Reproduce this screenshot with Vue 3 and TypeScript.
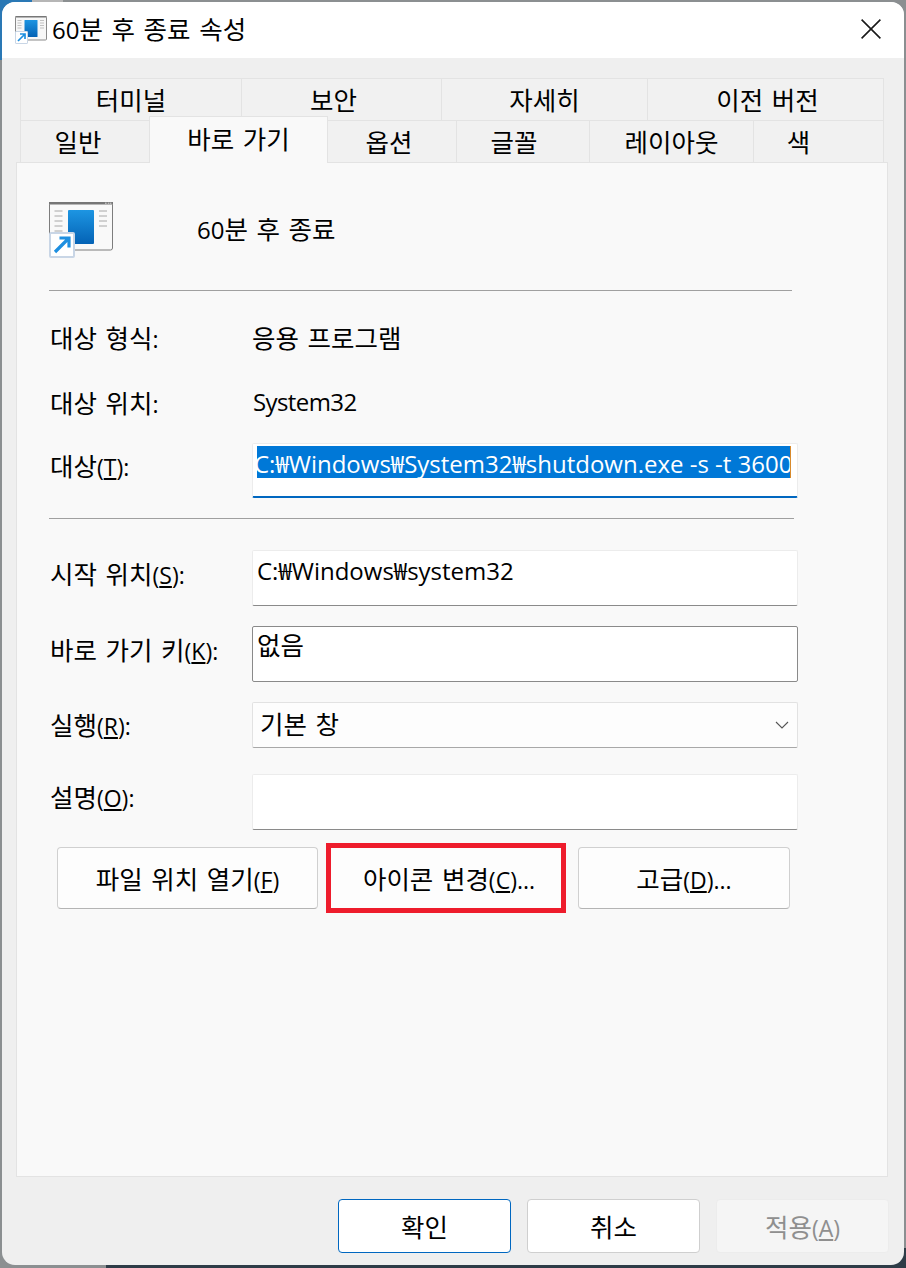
<script setup lang="ts">
const topTabs = [
  { label: '터미널', w: 222, shift: 0 },
  { label: '보안', w: 201, shift: -8 },
  { label: '자세히', w: 207, shift: 0 },
  { label: '이전 버전', w: 237, shift: 2 },
]
const lowTabs = [
  { label: '일반', w: 130, shift: -7, active: false },
  { label: '바로 가기', w: 179, shift: 0, active: true },
  { label: '옵션', w: 130, shift: -3, active: false },
  { label: '글꼴', w: 134, shift: -9, active: false },
  { label: '레이아웃', w: 165, shift: 0, active: false },
  { label: '색', w: 131, shift: -20, active: false },
]
function tabStyle(t: { w: number; shift: number }) {
  return {
    width: t.w + 'px',
    paddingLeft: Math.max(t.shift * 2, 0) + 'px',
    paddingRight: Math.max(-t.shift * 2, 0) + 'px',
  }
}
</script>

<template>
  <div class="desk">
    <div class="window">
      <header class="titlebar">
        <svg class="icon-small" viewBox="0 0 64 56">
          <defs>
            <linearGradient id="blueA" x1="0" y1="0" x2="0" y2="1">
              <stop offset="0" stop-color="#1d95e2" />
              <stop offset="1" stop-color="#0462b5" />
            </linearGradient>
          </defs>
          <rect x="1" y="1" width="62" height="47" rx="2" fill="#f7f7f7" stroke="#8a8a8a" stroke-width="2" />
          <rect x="1" y="0" width="62" height="3" fill="#777" />
          <rect x="19" y="8" width="26" height="34" rx="1" fill="url(#blueA)" />
          <path d="M5 9h8M5 14h8M5 19h8M5 24h8M50 9h8M50 14h8M50 19h8M50 24h8" stroke="#aaa" stroke-width="1.4" />
          <rect x="1" y="31" width="24" height="24" rx="1" fill="#fff" stroke="#c9d6e6" stroke-width="2" />
          <path d="M6 50L19 37M10 36h10v10" fill="none" stroke="#1e8fe0" stroke-width="3.4" />
        </svg>
        <span class="title"><span class="lt">60</span>분 후 종료 속성</span>
        <svg class="close" viewBox="0 0 20 20">
          <path d="M.6.6l18.800 18.800M19.400.6L.6 19.400" stroke="#1a1a1a" stroke-width="1.6" fill="none" />
        </svg>
      </header>

      <div class="body">
        <div class="tabs">
          <div class="tab-row">
            <div v-for="t in topTabs" :key="t.label" class="tab" :style="tabStyle(t)">{{ t.label }}</div>
          </div>
          <div class="tab-row">
            <div
              v-for="t in lowTabs"
              :key="t.label"
              class="tab"
              :class="{ active: t.active }"
              :style="tabStyle(t)"
            >{{ t.label }}</div>
          </div>
        </div>

        <section class="panel">
          <div class="head">
            <svg class="icon-big" viewBox="0 0 64 56">
              <defs>
                <linearGradient id="blueB" x1="0" y1="0" x2="0" y2="1">
                  <stop offset="0" stop-color="#1d95e2" />
                  <stop offset="1" stop-color="#0462b5" />
                </linearGradient>
              </defs>
              <rect x=".5" y=".5" width="63" height="47.5" rx="2" fill="#f9f9f9" stroke="#7d7d7d" />
              <rect x="0" y="0" width="64" height="2.5" fill="#767676" />
              <path d="M56 1.200h1.600M58.800 1.200h1.600M61 1.200h1.400" stroke="#ddd" stroke-width="1" />
              <rect x="19" y="8" width="26" height="34" rx="1" fill="url(#blueB)" />
              <path d="M5.500 9h8M5.500 14h8M5.500 19h8M5.500 24h8M5.500 29h8M50 9h8M50 14h8M50 19h8M50 24h8" stroke="#a8a8a8" stroke-width="1" />
              <rect x="1" y="31" width="24" height="24" rx="1" fill="#fff" stroke="#c9d6e6" stroke-width="2" />
              <path d="M6 50L19 37M10.500 36h9.500v9.500" fill="none" stroke="#1e8fe0" stroke-width="3.2" />
            </svg>
            <span class="name"><span class="lt">60</span>분 후 종료</span>
          </div>

          <div class="sep sep-a"></div>

          <div class="row info first">
            <span class="label">대상 형식<span class="mn">:</span></span>
            <span class="value">응용 프로그램</span>
          </div>
          <div class="row info second">
            <span class="label">대상 위치<span class="mn">:</span></span>
            <span class="value sys">System32</span>
          </div>
          <div class="row target">
            <span class="label">대상<span class="mn">(<u>T</u>):</span></span>
            <div class="field focused"><span class="selected">C:₩Windows₩System32₩shutdown.exe -s -t 3600</span></div>
          </div>

          <div class="sep sep-b"></div>

          <div class="row start">
            <span class="label">시작 위치<span class="mn">(<u>S</u>):</span></span>
            <div class="field"><span>C:₩Windows₩system32</span></div>
          </div>
          <div class="row hotkey">
            <span class="label">바로 가기 키<span class="mn">(<u>K</u>):</span></span>
            <div class="field outlined"><span class="ko">없음</span></div>
          </div>
          <div class="row run">
            <span class="label">실행<span class="mn">(<u>R</u>):</span></span>
            <div class="combo">
              <span>기본 창</span>
              <svg class="chev" viewBox="0 0 14 8">
                <path d="M1 1l6 6 6-6" fill="none" stroke="#555" stroke-width="1.1" />
              </svg>
            </div>
          </div>
          <div class="row desc">
            <span class="label">설명<span class="mn">(<u>O</u>):</span></span>
            <div class="field"></div>
          </div>

          <div class="actions">
            <button class="btn a1">파일 위치 열기<span class="mn">(<u>F</u>)</span></button>
            <button class="btn a2">아이콘 변경<span class="mn">(<u>C</u>)...</span></button>
            <button class="btn a3">고급<span class="mn">(<u>D</u>)...</span></button>
          </div>
        </section>

        <footer class="footer">
          <button class="btn foot primary">확인</button>
          <button class="btn foot">취소</button>
          <button class="btn foot disabled">적용<span class="mn">(<u>A</u>)</span></button>
        </footer>
      </div>
    </div>
  </div>
</template>

<style>
html, body { margin: 0; padding: 0; }
</style>

<style scoped>
.desk {
  width: 906px;
  height: 1268px;
  box-sizing: border-box;
  padding: 2px 2px 3px 2px;
  overflow: hidden;
  background:
    linear-gradient(#2e3c47, #2e3c47) bottom right / 800px 20px no-repeat,
    linear-gradient(#2a78b5, #2a78b5) top left / 32px 60px no-repeat,
    linear-gradient(#b6b6b6, #b6b6b6) 32px 0 / 31px 20px no-repeat,
    #8b8f91;
  font-family: "Open Sans", "Noto Sans CJK KR", sans-serif;
  font-size: 25.5px;
  word-spacing: 2px;
  color: #000;
}
.lt { font-size: 24px; }
.mn { font-size: 23px; word-spacing: 0; }
.window {
  height: 100%;
  border-radius: 13px;
  overflow: hidden;
  background: #efefef;
  display: flex;
  flex-direction: column;
}
.titlebar {
  height: 56px;
  flex: none;
  background: #fff;
  display: flex;
  align-items: center;
  padding: 0 23px 0 13px;
}
.icon-small { width: 32px; height: 28px; margin-right: 5px; flex: none; }
.title { line-height: 54px; height: 56px; flex: 1; }
.close { width: 20px; height: 20px; flex: none; margin-top: -2px; }
.body {
  flex: 1;
  display: flex;
  flex-direction: column;
  padding: 20px 16px 0 14px;
}
.tabs { padding-left: 4px; height: 84px; flex: none; }
.tab-row { display: flex; height: 42px; }
.tab {
  box-sizing: border-box;
  height: 42px;
  background: #f1f1f1;
  border: 1px solid #e3e3e3;
  border-bottom: none;
  margin-left: -1px;
  display: flex;
  align-items: center;
  justify-content: center;
  padding-bottom: 3px;
}
.tab-row .tab:first-child { margin-left: 0; }
.tab.active {
  height: 47px;
  margin-top: -4px;
  background: #f9f9f9;
  position: relative;
  z-index: 1;
  padding-bottom: 6px;
}
.panel {
  box-sizing: border-box;
  height: 1015px;
  flex: none;
  background: #f9f9f9;
  border: 1px solid #e3e3e3;
  padding: 39px 0 0 32px;
}
.head { display: flex; height: 48px; }
.icon-big { width: 64px; height: 56px; flex: none; }
.name { margin-left: 84px; line-height: 54px; }
.sep { height: 1px; background: #a0a0a0; }
.sep-a { width: 743px; margin-top: 40px; }
.sep-b { width: 745px; margin-top: 20px; }
.row {
  display: grid;
  grid-template-columns: 203px 546px;
  align-items: center;
}
.label { padding-left: 1px; white-space: nowrap; }
.info { box-sizing: border-box; height: 44px; padding-bottom: 4px; }
.sys { font-size: 24px; letter-spacing: -0.6px; margin-left: 1px; }
.first { margin-top: 25px; }
.second { margin-top: 21px; }
.target { height: 55px; margin-top: 18px; }
.target .label { margin-bottom: 12px; }
.start { height: 56px; margin-top: 31px; }
.start .label { margin-bottom: 12px; }
.hotkey { height: 56px; margin-top: 20px; }
.hotkey .label { margin-bottom: 12px; }
.run { height: 46px; margin-top: 20px; }
.run .label { margin-bottom: 4px; }
.desc { height: 56px; margin-top: 26px; }
.desc .label { margin-bottom: 14px; }
.field {
  box-sizing: border-box;
  height: 100%;
  background: #fff;
  border: 1px solid #ececec;
  border-bottom: 1px solid #8a8a8a;
  border-radius: 2px;
  padding: 3px 4px 0;
  overflow: hidden;
  white-space: nowrap;
  line-height: 34px;
  font-size: 24px;
  word-spacing: 0;
}
.ko { font-size: 25.5px; }
.focused {
  border-bottom: 2px solid #0067c0;
  padding: 2px 6px 0 4px;
}
.selected {
  display: block;
  background: #0078d7;
  color: #fff;
  height: 32px;
  width: 534px;
  overflow: hidden;
  border-right: 1px solid #d88a2c;
  box-sizing: border-box;
  text-indent: -3px;
  line-height: 35px;
}
.outlined { border: 1px solid #8a8a8a; padding-top: 1px; }
.combo {
  box-sizing: border-box;
  height: 100%;
  background: #fdfdfd;
  border: 1px solid #e2e2e2;
  border-bottom-color: #a8a8a8;
  border-radius: 2px;
  padding: 0 8px 6px 7px;
  display: flex;
  align-items: center;
  justify-content: space-between;
}
.chev { width: 14px; height: 8px; margin-top: 6px; }
.actions {
  display: grid;
  grid-template-columns: 261px 232px 216px;
  column-gap: 12px;
  margin: 17px 0 0 8px;
  height: 61px;
}
.btn {
  box-sizing: border-box;
  font: inherit;
  word-spacing: inherit;
  color: #000;
  background: #fdfdfd;
  border: 1px solid #d0d0d0;
  border-bottom-color: #b4b4b4;
  border-radius: 4px;
  padding: 0 0 2px;
  white-space: nowrap;
}
.a2 {
  height: 62px;
  outline: 4px solid #ee1c2c;
  border-radius: 0;
  border-color: #ee1c2c;
  padding-left: 6px;
}
.a3 { margin-left: 4px; }
.footer {
  display: flex;
  justify-content: flex-end;
  gap: 16px;
  margin: 22px -1px 0 0;
}
.foot { width: 173px; height: 54px; background: #fff; border-color: #cfcfcf; }
.primary { border-color: #0067c0; }
.disabled { color: #8f8f8f; background: #f5f5f5; border-color: #ececec; }
</style>
